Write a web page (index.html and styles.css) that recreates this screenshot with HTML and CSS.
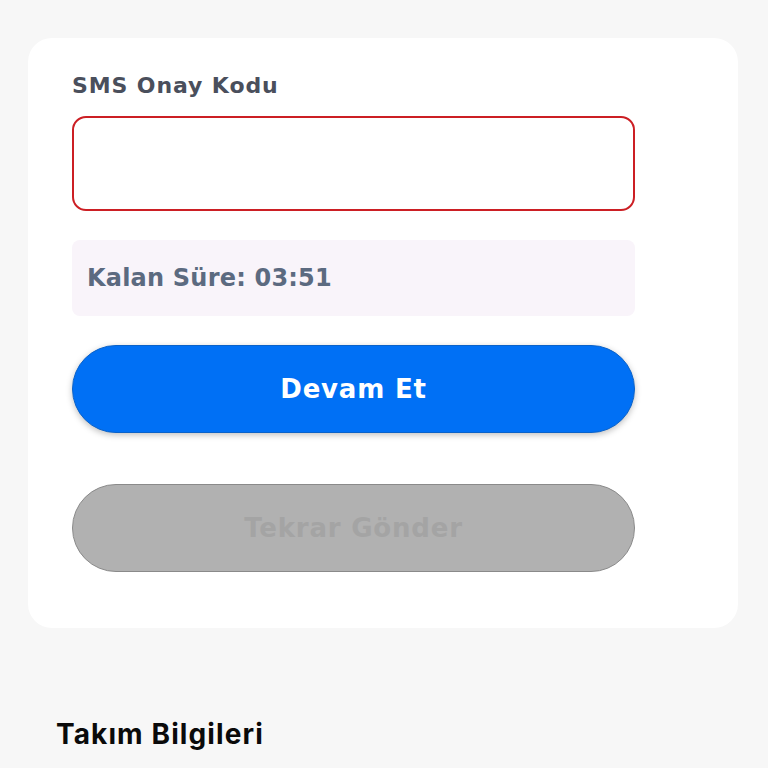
FILE: index.html
```html
<!DOCTYPE html>
<html lang="tr">
<head>
<meta charset="utf-8">
<link rel="stylesheet" href="styles.css">
</head>
<body>
<div class="page">
  <section class="card">
    <label class="field-label" for="sms">SMS Onay Kodu</label>
    <input class="code-input" id="sms" type="text">
    <div class="timer">Kalan Süre: 03:51</div>
    <button class="btn btn-primary">Devam Et</button>
    <button class="btn btn-disabled" disabled>Tekrar Gönder</button>
  </section>
  <h2 class="section-title">Takım Bilgileri</h2>
</div>
</body>
</html>
```
FILE: styles.css
```css
* { box-sizing: border-box; }
html, body { margin: 0; padding: 0; background: #f7f7f7; }
body { font-family: "DejaVu Sans", "Inter", sans-serif; overflow: hidden; height: 768px; }
.page { padding: 38px 30px 0 28px; }
.card {
  background: #fff;
  border-radius: 24px;
  padding: 34px 103px 56px 44px;
  display: flex;
  flex-direction: column;
  height: 590px;
}
.field-label {
  font-size: 22px;
  font-weight: 700;
  color: #4a4f5c;
  line-height: 28px;
  letter-spacing: 0.9px;
}
.code-input {
  margin-top: 16px;
  height: 95px;
  border: 2px solid #cc1f24;
  border-radius: 14px;
  background: #fff;
  outline: none;
  font-size: 22px;
}
.timer {
  margin-top: 29px;
  height: 76px;
  background: #f9f4fa;
  border-radius: 8px;
  padding: 0 15px;
  display: flex;
  align-items: center;
  font-size: 24px;
  font-weight: 700;
  color: #5c6a80;
  letter-spacing: 0.2px;
}
.btn {
  height: 88px;
  border-radius: 44px;
  font-family: inherit;
  font-size: 26px;
  font-weight: 700;
  letter-spacing: 0.8px;
}
.btn-primary {
  margin-top: 29px;
  background: #0070f5;
  color: #fff;
  border: 1px solid #0a62c9;
  box-shadow: 0 2px 6px rgba(0,0,0,0.25);
}
.btn-disabled {
  margin-top: 51px;
  background: #b1b1b1;
  color: #a4a4a4;
  border: 1px solid #8a8a8a;
}
.section-title {
  margin: 88px 0 0 28px;
  font-family: "Inter", "DejaVu Sans", sans-serif;
  font-size: 28px;
  font-weight: 700;
  color: #0a0a0a;
  line-height: 36px;
  letter-spacing: 1.1px;
}
```
